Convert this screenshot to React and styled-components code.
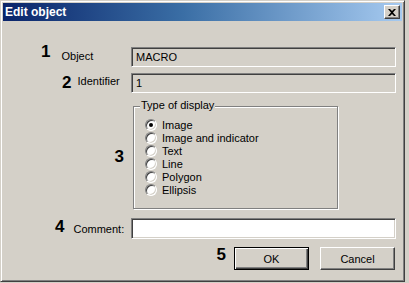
import React from 'react';
import styled, { createGlobalStyle } from 'styled-components';

const GlobalStyle = createGlobalStyle`
  html, body {
    margin: 0;
    padding: 0;
    background: #d4d0c8;
  }
  body {
    font-family: 'Liberation Sans', Arial, sans-serif;
    font-size: 11px;
    color: #000;
  }
`;

const Window = styled.div`
  width: 405px;
  height: 282px;
  box-sizing: border-box;
  background: #d4d0c8;
  border: 1px solid;
  border-color: #d4d0c8 #404040 #404040 #d4d0c8;
  box-shadow: inset 1px 1px 0 #fff, inset -1px -1px 0 #808080;
  padding: 2px;
  display: flex;
  flex-direction: column;
`;

const TitleBar = styled.div`
  height: 18px;
  flex: none;
  display: flex;
  align-items: center;
  justify-content: space-between;
  padding: 0 2px;
  background: linear-gradient(90deg, #0a246a 0%, #3a6ea5 45%, #a6caf0 100%);
`;

const Title = styled.span`
  color: #fff;
  font-weight: bold;
  font-size: 12px;
`;

const CloseButton = styled.button`
  width: 16px;
  height: 14px;
  padding: 0;
  box-sizing: border-box;
  background: #d4d0c8;
  border: 1px solid;
  border-color: #fff #404040 #404040 #fff;
  box-shadow: inset -1px -1px 0 #808080;
  display: flex;
  align-items: center;
  justify-content: center;
`;

const Body = styled.div`
  display: flex;
  flex-direction: column;
  padding: 26px 0 0 0;
`;

const Row = styled.div`
  display: grid;
  grid-template-columns: 128px 265px;
  grid-template-rows: ${(p) => p.h}px;
  margin-bottom: ${(p) => p.gap || 0}px;
`;

const LabelCell = styled.div`
  display: flex;
  align-items: center;
  justify-content: ${(p) => (p.end ? 'flex-end' : 'flex-start')};
  padding-left: ${(p) => p.indent || 0}px;
  padding-right: ${(p) => p.right || 0}px;
  gap: ${(p) => p.space || 0}px;
`;

const Digit = styled.span`
  font-family: 'Liberation Sans Narrow', 'Liberation Sans', Arial, sans-serif;
  font-weight: bold;
  font-size: 17px;
  line-height: 16px;
  margin-bottom: ${(p) => p.raise || 0}px;
`;

const Label = styled.span`
  margin-bottom: ${(p) => p.raise || 0}px;
`;

const Field = styled.input`
  height: ${(p) => p.h}px;
  width: 265px;
  box-sizing: border-box;
  margin: 0;
  border: 1px solid;
  border-color: #808080 #fff #fff #808080;
  box-shadow: inset 1px 1px 0 #404040, inset -1px -1px 0 #d4d0c8;
  background: ${(p) => (p.inactive ? '#d4d0c8' : '#fff')};
  padding: 0 4px;
  font-family: 'Liberation Sans', Arial, sans-serif;
  font-size: 11px;
  color: #000;
  outline: none;
`;

const GroupBox = styled.div`
  position: relative;
  margin-left: 2px;
  width: 205px;
  height: 103px;
  box-sizing: border-box;
  border: 1px solid #808080;
  box-shadow: 1px 1px 0 #fff, inset 1px 1px 0 #fff;
  padding: 11px 0 0 11px;
  display: flex;
  flex-direction: column;
`;

const Legend = styled.span`
  position: absolute;
  top: -8px;
  left: 6px;
  line-height: 13px;
  padding: 0 1px;
  background: #d4d0c8;
`;

const Option = styled.label`
  height: 13px;
  display: flex;
  align-items: center;
  gap: 5px;
`;

const RadioDot = styled.span`
  width: 12px;
  height: 12px;
  box-sizing: border-box;
  border-radius: 50%;
  border: 1px solid;
  border-color: #808080 #fff #fff #808080;
  box-shadow: inset 1px 1px 0 #404040, inset -1px -1px 0 #d4d0c8;
  background: #fff;
  display: flex;
  align-items: center;
  justify-content: center;
  flex: none;

  &::after {
    content: '';
    width: 4px;
    height: 4px;
    border-radius: 50%;
    background: ${(p) => (p.checked ? '#000' : 'transparent')};
  }
`;

const ButtonRow = styled.div`
  height: 23px;
  width: 393px;
  box-sizing: border-box;
  padding-right: 1px;
  display: flex;
  align-items: center;
  justify-content: flex-end;
`;

const Button = styled.button`
  width: 75px;
  height: 23px;
  box-sizing: border-box;
  margin-left: ${(p) => p.space || 0}px;
  background: #d4d0c8;
  font-family: 'Liberation Sans', Arial, sans-serif;
  font-size: 11px;
  color: #000;
  padding: 0;
  border: 1px solid;
  border-color: ${(p) => (p.primary ? '#000' : '#fff #404040 #404040 #fff')};
  box-shadow: ${(p) =>
    p.primary
      ? 'inset 1px 1px 0 #fff, inset -1px -1px 0 #404040, inset -2px -2px 0 #808080'
      : 'inset -1px -1px 0 #808080'};
`;

const options = ['Image', 'Image and indicator', 'Text', 'Line', 'Polygon', 'Ellipsis'];

export default function App() {
  return (
    <>
      <GlobalStyle />
      <Window>
        <TitleBar>
          <Title>Edit object</Title>
          <CloseButton aria-label="Close">
            <svg width="8" height="7" viewBox="0 0 8 7">
              <path d="M0 0h2l2 2 2-2h2L5 3.5 8 7H6L4 5 2 7H0l3-3.5z" fill="#000" />
            </svg>
          </CloseButton>
        </TitleBar>
        <Body>
          <Row h={20} gap={6}>
            <LabelCell indent={38} space={11}>
              <Digit raise={10}>1</Digit>
              <Label raise={2}>Object</Label>
            </LabelCell>
            <Field h={20} inactive readOnly value="MACRO" />
          </Row>
          <Row h={20} gap={13}>
            <LabelCell indent={59} space={6}>
              <Digit>2</Digit>
              <Label raise={5}>Identifier</Label>
            </LabelCell>
            <Field h={20} inactive readOnly value="1" />
          </Row>
          <Row h={104} gap={8}>
            <LabelCell end right={7}>
              <Digit raise={2}>3</Digit>
            </LabelCell>
            <GroupBox>
              <Legend>Type of display</Legend>
              {options.map((o, i) => (
                <Option key={o}>
                  <RadioDot checked={i === 0} />
                  {o}
                </Option>
              ))}
            </GroupBox>
          </Row>
          <Row h={21} gap={8}>
            <LabelCell indent={52} space={9}>
              <Digit raise={4}>4</Digit>
              <Label>Comment:</Label>
            </LabelCell>
            <Field h={21} readOnly value="" />
          </Row>
          <ButtonRow>
            <Digit raise={7}>5</Digit>
            <Button primary space={8}>OK</Button>
            <Button space={11}>Cancel</Button>
          </ButtonRow>
        </Body>
      </Window>
    </>
  );
}
